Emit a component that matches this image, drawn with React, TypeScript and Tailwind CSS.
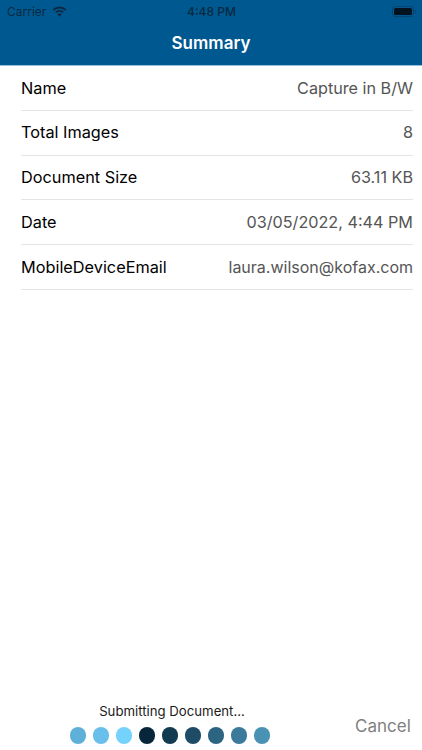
const rows = [
  { label: 'Name', value: 'Capture in B/W' },
  { label: 'Total Images', value: '8', clip: true },
  { label: 'Document Size', value: '63.11 KB' },
  { label: 'Date', value: '03/05/2022, 4:44 PM' },
  { label: 'MobileDeviceEmail', value: 'laura.wilson@kofax.com', small: true },
];

const dots = [
  'bg-[#5fb0d8]',
  'bg-[#68c0ea]',
  'bg-[#74d2fc]',
  'bg-[#08263a]',
  'bg-[#123a50]',
  'bg-[#1e4c66]',
  'bg-[#2c6482]',
  'bg-[#3b7a9a]',
  'bg-[#4a92b4]',
];

export default function App() {
  return (
    <div className="flex flex-col w-[422px] h-[750px] bg-white overflow-hidden font-['Inter',sans-serif]">
      <div className="h-[66px] shrink-0 bg-[#005891] border-b border-[#8fc3dc]">
        <div className="flex items-center justify-between h-[23px] pl-[7px] pr-[6px] text-[#0b2a40]">
          <div className="flex items-center gap-[6px] w-[120px]">
            <span className="text-[12px]">Carrier</span>
            <svg width="15" height="11" viewBox="0 0 15 11" fill="none" stroke="currentColor" strokeWidth="1.9">
              <path d="M1.3 4A9 9 0 0 1 13.7 4" />
              <path d="M3.8 6.5A5.5 5.5 0 0 1 11.2 6.5" />
              <path d="M7.5 10.8L5.3 8.6A3.1 3.1 0 0 1 9.7 8.6Z" fill="currentColor" stroke="none" />
            </svg>
          </div>
          <span className="text-[12px] font-medium">4:48 PM</span>
          <div className="flex justify-end items-center gap-[1px] w-[120px]">
            <div className="flex items-center justify-center w-[22px] h-[11px] rounded-[3px] border border-[#0b2a40]/40">
              <div className="w-[18px] h-[7px] rounded-[1.5px] bg-[#02121e]" />
            </div>
            <div className="w-[1px] h-[4px] bg-[#0b2a40]/40" />
          </div>
        </div>
        <div className="flex items-center justify-center h-[41px] text-[17px] font-semibold text-white">Summary</div>
      </div>

      <div className="flex-1 pl-[21px] pr-[9px]">
        {rows.map((row) => (
          <div key={row.label} className="flex items-center justify-between h-[44.75px] border-b border-[#e4e4e4]">
            <span className={row.clip ? 'text-[16.3px] leading-[17px] h-[17px] overflow-hidden text-black' : 'text-[16.3px] text-black'}>
              {row.label}
            </span>
            <span className={row.small ? 'text-[16px] text-[#555555]' : 'text-[16.2px] text-[#555555]'}>{row.value}</span>
          </div>
        ))}
      </div>

      <div className="flex items-start h-[50px] shrink-0">
        <div className="flex flex-col items-center w-[340px] pt-[1px]">
          <span className="pl-[4px] text-[13.2px] leading-[20px] text-[#1a1a1a]">Submitting Document...</span>
          <div className="flex gap-[6.5px] mt-[6px]">
            {dots.map((dot, i) => (
              <div key={i} className={`w-[16.5px] h-[16.5px] rounded-full ${dot}`} />
            ))}
          </div>
        </div>
        <span className="ml-[15px] mt-[14px] text-[17px] text-[#808080]">Cancel</span>
      </div>
    </div>
  );
}
